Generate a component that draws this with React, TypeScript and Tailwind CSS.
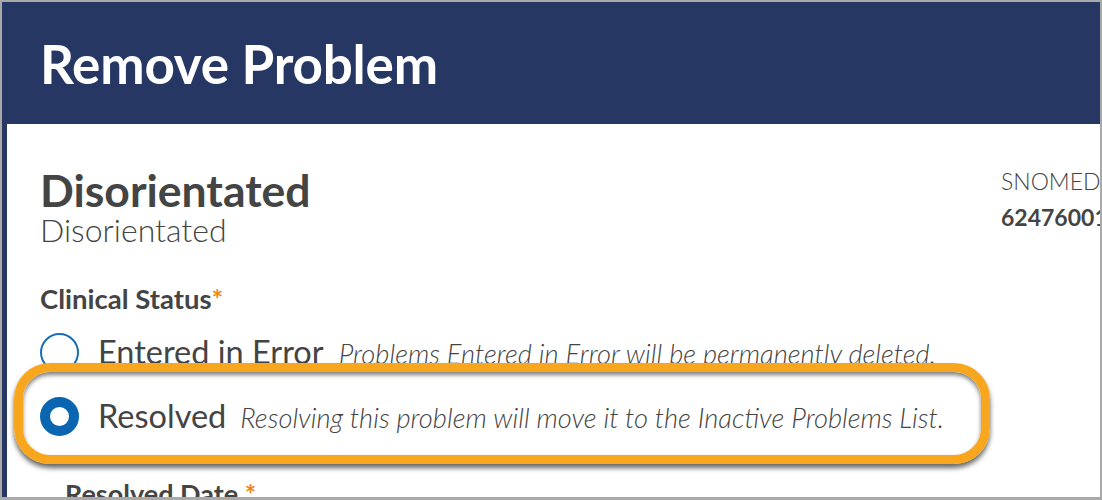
export default function App() {
  return (
    <div
      className="w-[1102px] h-[500px] bg-[#a9a9a9] pt-[2px] pl-[2px] pr-[2px] pb-[3px] overflow-hidden"
      style={{ fontFamily: "Lato, 'Open Sans', sans-serif" }}
    >
      <div className="relative flex flex-col h-full bg-white border-l-[5px] border-[#273763] overflow-hidden">
        {/* Header */}
        <div className="h-[122px] flex-shrink-0 bg-[#273763] flex items-center pl-[33px]">
          <h1 className="text-[53px] font-bold text-white leading-none tracking-[-0.2px]">
            Remove Problem
          </h1>
        </div>

        {/* Body */}
        <div className="flex pl-[33px] pt-[45px]">
          <div className="flex-1 min-w-0">
            <div className="text-[44.5px] font-bold text-[#444] leading-[42px]">Disorientated</div>
            <div className="text-[32px] font-light text-[#444] leading-[38px]">Disorientated</div>

            <div className="mt-[35px] text-[27.5px] font-bold text-[#444] leading-[30px]">
              Clinical Status<span className="text-[#ec8a1c]">*</span>
            </div>

            <div className="mt-[18px] flex items-center h-[40px]">
              <span className="w-[39px] h-[39px] rounded-full border-2 border-[#1a6db5] flex-shrink-0" />
              <div className="ml-[19px] flex items-baseline whitespace-nowrap">
                <span className="text-[32.5px] text-[#444] leading-none">Entered in Error</span>
                <span className="ml-[15px] text-[27.3px] italic font-light text-[#444] leading-none">
                  Problems Entered in Error will be permanently deleted.
                </span>
              </div>
            </div>

            <div className="mt-[24px] flex items-center h-[40px]">
              <span className="w-[39px] h-[39px] rounded-full border-[10px] border-[#0b66b1] flex-shrink-0" />
              <div className="ml-[19px] flex items-baseline whitespace-nowrap">
                <span className="text-[32.5px] text-[#444] leading-none">Resolved</span>
                <span className="ml-[14px] text-[27.3px] italic font-light text-[#444] leading-none">
                  Resolving this problem will move it to the Inactive Problems List.
                </span>
              </div>
            </div>

            <div className="mt-[43px] pl-[25px] text-[27px] font-bold text-[#444] leading-[30px]">
              Resolved Date <span className="text-[#ec8a1c]">*</span>
            </div>
          </div>

          <div className="w-[100px] flex-shrink-0 pl-[1px] -mt-[1px] whitespace-nowrap">
            <div className="text-[23px] font-light text-[#444] leading-[26px]">SNOMED</div>
            <div className="mt-[10px] text-[23px] font-bold text-[#444] leading-[26px]">62476001</div>
          </div>
        </div>

        {/* Highlight annotation over the selected option */}
        <div className="absolute left-[7px] top-[361px] w-[976px] h-[101px] rounded-[36px] border-[9px] border-[#f9a61f] shadow-[0_4px_5px_rgba(0,0,0,0.6),inset_0_3px_4px_rgba(0,0,0,0.5)] pointer-events-none" />
      </div>
    </div>
  );
}
